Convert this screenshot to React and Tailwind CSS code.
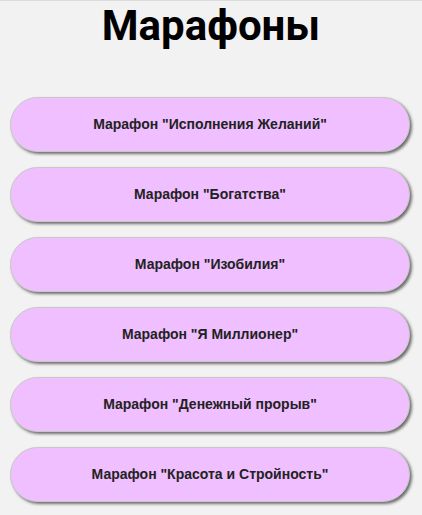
import React from "react";

const marathons = [
  'Марафон "Исполнения Желаний"',
  'Марафон "Богатства"',
  'Марафон "Изобилия"',
  'Марафон "Я Миллионер"',
  'Марафон "Денежный прорыв"',
  'Марафон "Красота и Стройность"',
];

const MarathonBtn = ({ name }) => (
  <button className="w-full h-[55px] rounded-full bg-[#f0bfff] border border-[#c8c8c8] shadow-[2px_2px_3px_rgba(0,0,0,0.55)] text-[14px] font-bold text-[#222] font-['Liberation_Sans',Arial,sans-serif]">
    {name}
  </button>
);

const App = () => {
  return (
    <div className="min-h-[515px] bg-[#f2f2f2] border-t border-[#dcdcdc]">
      <h1 className="text-center text-[42px] leading-[48px] font-bold text-black font-['Roboto',sans-serif] pt-[1px]">
        Марафоны
      </h1>
      <div className="flex flex-col gap-[15px] px-[10px] mt-[47px] pr-[12px]">
        {marathons.map((m) => (
          <MarathonBtn key={m} name={m} />
        ))}
      </div>
    </div>
  );
};

export default App;
